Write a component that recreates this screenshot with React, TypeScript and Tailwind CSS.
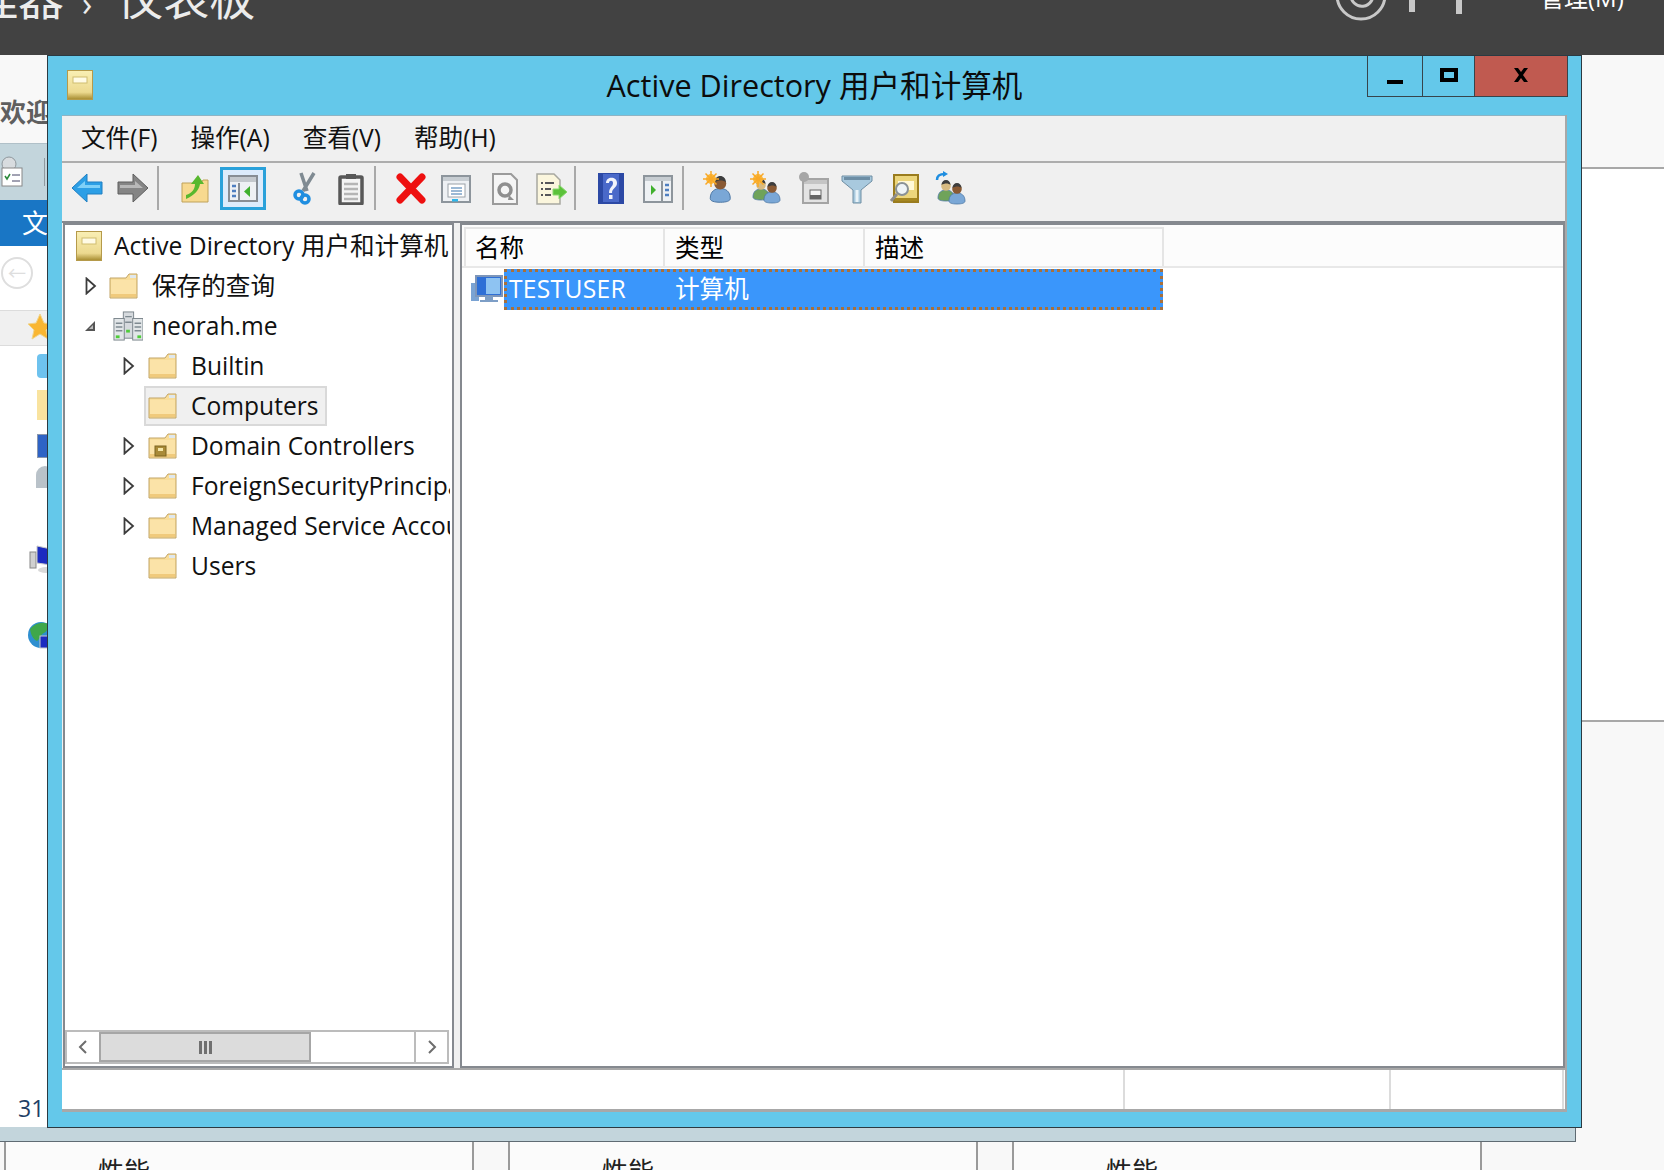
import React from "react";

const FONT = { fontFamily: '"Open Sans","Noto Sans CJK SC",sans-serif' };

function Folder({ badge = false }: { badge?: boolean }) {
  return (
    <svg width="30" height="28" viewBox="0 0 30 28" className="shrink-0">
      <path d="M1 6h16l3-4h8v24H1z" fill="#f9dd99" stroke="#c2a566" />
      <path d="M2 8h25v17H2z" fill="#fbe3a8" />
      <path d="M21 3h6v3h-6z" fill="#dfe8ee" />
      <path d="M2 22h25v3H2z" fill="#f0ca7c" />
      {badge && <rect x="7" y="14" width="11" height="10" fill="#a98a37" stroke="#7c6520" />}
      {badge && <rect x="10" y="16" width="5" height="3" fill="#f4e6a8" />}
    </svg>
  );
}

function Book({ w = 26, h = 30 }: { w?: number; h?: number }) {
  return (
    <svg width={w} height={h} viewBox="0 0 26 30" className="shrink-0">
      <defs>
        <linearGradient id="bk" x1="0" y1="0" x2="0" y2="1">
          <stop offset="0" stopColor="#f9efb4" />
          <stop offset="0.75" stopColor="#ecd98f" />
          <stop offset="1" stopColor="#a58a2e" />
        </linearGradient>
      </defs>
      <rect x="0.5" y="0.5" width="25" height="29" fill="url(#bk)" stroke="#b59a4a" />
      <rect x="6" y="7" width="14" height="6" fill="#fffbe6" stroke="#d0bd70" />
    </svg>
  );
}

function Person({ x, y, s = 1, shirt = "#7aa7d6", face = "#8a5a33" }: { x: number; y: number; s?: number; shirt?: string; face?: string }) {
  return (
    <g transform={`translate(${x} ${y}) scale(${s})`}>
      <path d="M1 18c0-6 4-8 8-8s8 2 8 8c0 2-3 3-8 3s-8-1-8-3z" fill={shirt} stroke="#4e78a5" strokeWidth="0.8" />
      <circle cx="9" cy="6" r="4.8" fill={face} />
      <path d="M4.5 5c0-3 2-5 4.5-5s4.5 2 4.5 5c-2-2-6-2-9 0z" fill="#3d3d3d" />
    </g>
  );
}

function Sun({ x, y }: { x: number; y: number }) {
  return (
    <g>
      <circle cx={x} cy={y} r="5" fill="#fbb93c" />
      <path d={`M${x - 8} ${y}h16M${x} ${y - 8}v16M${x - 5.5} ${y - 5.5}l11 11M${x + 5.5} ${y - 5.5}l-11 11`} stroke="#f9a825" strokeWidth="1.5" />
    </g>
  );
}

const I = ({ children }: { children: React.ReactNode }) => (
  <svg width="32" height="34" viewBox="0 0 32 34" className="shrink-0">{children}</svg>
);

const WinFrame = () => (
  <>
    <rect x="2" y="5" width="28" height="26" fill="#eef1f4" stroke="#8d959c" strokeWidth="2" />
    <rect x="3" y="6" width="26" height="4" fill="#c7cdd2" />
  </>
);

function Toolbar() {
  const sep = "w-[2px] h-[44px] bg-[#a9a9a9] shrink-0";
  return (
    <div className="h-[58px] bg-[#f0f0f0] flex items-center shrink-0 pb-[8px]">
      <div className="ml-[9px]"><I><path d="M1 17 16 3v8h15v12H16v8z" fill="#2c9fe6" stroke="#1f7fc2" /><path d="M6 17 14 10v4h15v3H14z" fill="#7fd0f8" /></I></div>
      <div className="ml-[14px]"><I><path d="M31 17 16 3v8H1v12h15v8z" fill="#858585" stroke="#5f5f5f" /><path d="M26 17 18 10v4H3v3h15z" fill="#b8b8b8" /></I></div>
      <div className={sep + " ml-[8px]"} />
      <div className="ml-[20px]"><I>
        <path d="M3 12h19l2-3h5v22H3z" fill="#f7d98f" stroke="#bfa25b" />
        <path d="M7 24c6-2 9-6 9-11h-4l7-9 6 9h-4c-1 6-5 11-14 15z" fill="#58b82e" />
      </I></div>
      <div className="ml-[9px] w-[46px] h-[43px] border-[3px] border-[#2aa1da] bg-[#dcebfb] flex items-center justify-center shrink-0">
        <svg width="32" height="30" viewBox="0 0 32 30">
          <rect x="2" y="3" width="28" height="25" fill="#eef1f4" stroke="#878d94" strokeWidth="2" />
          <rect x="3" y="4" width="26" height="5" fill="#c3c8cd" />
          <path d="M12 10v18" stroke="#878d94" strokeWidth="2" />
          <path d="M5 13h4M5 18h4M5 23h4" stroke="#4f7fc0" strokeWidth="2.5" />
          <path d="M23 13v11l-6-5.500z" fill="#3fb02e" />
        </svg>
      </div>
      <div className="ml-[24px]"><I>
        <path d="M13 20 24 2M17 20 11 2" stroke="#7f8a92" strokeWidth="3.500" />
        <circle cx="9" cy="24" r="4" fill="none" stroke="#1f8ee0" strokeWidth="3.500" />
        <circle cx="15" cy="28" r="4" fill="none" stroke="#1f8ee0" strokeWidth="3.500" />
      </I></div>
      <div className="ml-[13px]"><I>
        <rect x="5" y="6" width="22" height="27" rx="1" fill="#f4f4f4" stroke="#585858" strokeWidth="3.500" />
        <rect x="11" y="3" width="10" height="5" fill="#585858" />
        <path d="M9 13h14M9 18h14M9 23h14M9 28h14" stroke="#b5b5b5" strokeWidth="2.500" />
      </I></div>
      <div className={sep + " ml-[7px]"} />
      <div className="ml-[19px]"><I>
        <path d="M5 6 27 29M27 6 5 29" stroke="#ee1010" strokeWidth="7" strokeLinecap="round" />
      </I></div>
      <div className="ml-[13px]"><I><WinFrame />
        <rect x="8" y="13" width="17" height="13" fill="#fff" stroke="#9aa2a8" />
        <path d="M11 17h11M11 20h11M11 23h11" stroke="#7ba3c7" strokeWidth="1.300" />
        <rect x="12" y="28" width="6" height="2.500" fill="#2eb6ea" />
      </I></div>
      <div className="ml-[17px]"><I>
        <path d="M4 3h18l6 6v24H4z" fill="#f5f5f5" stroke="#9b9b9b" strokeWidth="2" />
        <circle cx="16" cy="19" r="6" fill="none" stroke="#8f8f8f" strokeWidth="3.500" />
        <path d="M20 24l5 5h-6z" fill="#8f8f8f" />
      </I></div>
      <div className="ml-[14px]"><I>
        <path d="M2 3h17l6 6v24H2z" fill="#fbf6dd" stroke="#a8a8a0" strokeWidth="1.500" />
        <path d="M6 12h2M10 12h9M6 18h2M10 18h6M6 24h2M10 24h6" stroke="#56565a" strokeWidth="1.800" />
        <path d="M18 18h6v-4l8 7-8 7v-4h-6z" fill="#5cc23a" stroke="#8ad870" />
      </I></div>
      <div className={sep + " ml-[7px]"} />
      <div className="ml-[19px]"><I>
        <rect x="3" y="2" width="26" height="31" fill="#2c49a5" />
        <rect x="8" y="3" width="16" height="28" fill="#4a69c9" />
        <path d="M11 12c0-7 11-7 11 0 0 5-5 5-5 10h-3c0-6 4-6 4-10 0-3-4-3-4 0z" fill="#f1f3fb" />
        <rect x="14" y="24" width="3.500" height="4" fill="#f1f3fb" />
      </I></div>
      <div className="ml-[15px]"><I><WinFrame />
        <path d="M20 10v20" stroke="#8d959c" strokeWidth="2" />
        <path d="M23 14h4M23 19h4M23 24h4" stroke="#4f7fc0" strokeWidth="2.500" />
        <path d="M9 14v10l5-5z" fill="#3fb02e" />
      </I></div>
      <div className={sep + " ml-[8px]"} />
      <div className="ml-[19px]"><I><Person x={6} y={5} s={1.25} /><Sun x={8} y={8} /></I></div>
      <div className="ml-[15px]"><I><Person x={2} y={8} face="#d8bb82" shirt="#6fa35a" /><Person x={13} y={11} /><Sun x={8} y={8} /></I></div>
      <div className="ml-[15px]"><I>
        <rect x="6" y="8" width="25" height="24" fill="#e3e3e3" stroke="#a4a4a4" strokeWidth="2" />
        <rect x="7" y="9" width="23" height="4" fill="#c5c5c5" />
        <rect x="13" y="19" width="11" height="9" fill="#f5f5f5" stroke="#6a6a6a" />
        <rect x="13" y="24" width="11" height="4" fill="#666" />
        <circle cx="7" cy="6" r="5" fill="#a6a6a6" />
      </I></div>
      <div className="ml-[12px]"><I>
        <path d="M1 5h30v5L20 19v13h-8V19L1 10z" fill="#a8c9de" stroke="#6f8ea3" />
        <path d="M3 6h26v3H3z" fill="#6d8ea5" />
        <path d="M14.500 19v12h3V19z" fill="#e9f3f9" />
      </I></div>
      <div className="ml-[15px]"><I>
        <rect x="6" y="4" width="24" height="27" fill="#ecd67c" stroke="#9a7c1e" strokeWidth="2" />
        <rect x="10" y="10" width="16" height="9" fill="#fff9d8" />
        <rect x="7" y="27" width="22" height="3" fill="#a58720" />
        <circle cx="14" cy="18" r="6" fill="#eef4f6" stroke="#8a9296" strokeWidth="2" />
        <path d="M9 23 3 30" stroke="#8d8d8d" strokeWidth="3" />
      </I></div>
      <div className="ml-[15px]"><I>
        <Person x={2} y={9} face="#d8bb82" shirt="#6fa35a" /><Person x={13} y={12} />
        <path d="M2 9c0-5 3-6 8-6" stroke="#1f8ee0" strokeWidth="2.500" fill="none" />
        <path d="M8 0l5 3-5 3z" fill="#1f8ee0" />
      </I></div>
    </div>
  );
}

function Arrow({ open = false }: { open?: boolean }) {
  return open ? (
    <svg width="14" height="14" viewBox="0 0 14 14" className="shrink-0"><path d="M12 2v10H2z" fill="#555" /><path d="M10 6v4H6z" fill="#bbb" /></svg>
  ) : (
    <svg width="12" height="18" viewBox="0 0 12 18" className="shrink-0"><path d="M1.500 1.500 10 9l-8.500 7.500z" fill="#fff" stroke="#3c3c3c" strokeWidth="1.800" /></svg>
  );
}

function Domain() {
  return (
    <svg width="30" height="32" viewBox="0 0 32 32" className="shrink-0">
      <rect x="11" y="1" width="11" height="28" fill="#d6dade" stroke="#79838a" />
      <rect x="1" y="8" width="11" height="23" fill="#e2e6e8" stroke="#79838a" />
      <rect x="21" y="8" width="11" height="23" fill="#e2e6e8" stroke="#79838a" />
      <path d="M3 13h7M3 17h7M3 21h7M23 13h7M23 17h7M23 21h7M13 6h7M13 12h7" stroke="#7f8a91" strokeWidth="1.500" />
      <rect x="3" y="26" width="4" height="3" fill="#4fcc3a" /><rect x="14" y="20" width="4" height="3" fill="#4fcc3a" /><rect x="26" y="26" width="4" height="3" fill="#4fcc3a" />
    </svg>
  );
}

function ChildRow({ label, arrow = true, badge = false, selected = false }: { label: string; arrow?: boolean; badge?: boolean; selected?: boolean }) {
  return (
    <div className="h-[40px] flex items-center">
      <div className="w-[12px] ml-[58px] flex justify-center shrink-0">{arrow && <Arrow />}</div>
      {selected ? (
        <div className="ml-[9px] h-[40px] pl-[2px] pr-[6px] flex items-center bg-[#f0f0f0] border-2 border-[#d9d9d9]">
          <Folder />
          <span className="ml-[13px] text-[#111] whitespace-nowrap">{label}</span>
        </div>
      ) : (
        <div className="ml-[13px] flex items-center">
          <Folder badge={badge} />
          <span className="ml-[13px] text-[#111] whitespace-nowrap">{label}</span>
        </div>
      )}
    </div>
  );
}

function Tree() {
  return (
    <div className="w-[391px] border-2 border-[#85898f] bg-white flex flex-col shrink-0">
      <div className="flex-1 min-h-0 mr-[2px] pt-[1px] overflow-hidden text-[24.6px] leading-[30px]">
        <div className="h-[40px] flex items-center pl-[11px] whitespace-nowrap">
          <Book />
          <span className="ml-[12px] text-[#111]">Active Directory 用户和计算机</span>
        </div>
        <div className="h-[40px] flex items-center">
          <div className="w-[12px] ml-[20px] flex justify-center"><Arrow /></div>
          <div className="ml-[12px]"><Folder /></div>
          <span className="ml-[13px] text-[#111]">保存的查询</span>
        </div>
        <div className="h-[40px] flex items-center">
          <div className="w-[14px] ml-[18px]"><Arrow open /></div>
          <div className="ml-[16px]"><Domain /></div>
          <span className="ml-[9px] text-[#111]">neorah.me</span>
        </div>
        <ChildRow label="Builtin" />
        <ChildRow label="Computers" arrow={false} selected />
        <ChildRow label="Domain Controllers" badge />
        <ChildRow label="ForeignSecurityPrincipals" />
        <ChildRow label="Managed Service Accounts" />
        <ChildRow label="Users" arrow={false} />
      </div>
      <div className="mr-[3px] mb-[2px] h-[34px] flex border-2 border-[#bcbcbc] shrink-0">
        <div className="w-[32px] flex items-center justify-center">
          <svg width="12" height="16" viewBox="0 0 12 16"><path d="M9 2 3 8l6 6" fill="none" stroke="#6d6d6d" strokeWidth="2" /></svg>
        </div>
        <div className="w-[212px] bg-[#dcdcdc] border-2 border-[#a6a6a6] flex items-center justify-center gap-[2px]">
          <div className="w-[3px] h-[13px] bg-[#707070]" /><div className="w-[3px] h-[13px] bg-[#707070]" /><div className="w-[3px] h-[13px] bg-[#707070]" />
        </div>
        <div className="flex-1" />
        <div className="w-[33px] border-l-2 border-[#bcbcbc] flex items-center justify-center">
          <svg width="12" height="16" viewBox="0 0 12 16"><path d="M3 2l6 6-6 6" fill="none" stroke="#6d6d6d" strokeWidth="2" /></svg>
        </div>
      </div>
    </div>
  );
}

function ListPane() {
  return (
    <div className="ml-[6px] flex-1 border-2 border-[#85898f] bg-white flex flex-col min-w-0">
      <div className="h-[43px] flex bg-[#fcfcfc] border-b-2 border-[#e8e8e8] pl-[2px] pt-[2px] shrink-0">
        <div className="w-[201px] pl-[9px] pt-[1px] flex items-center border-r-2 border-l-2 border-t-2 border-[#e5e5e5] text-[24.6px] text-black">名称</div>
        <div className="w-[200px] pl-[10px] pt-[1px] flex items-center border-r-2 border-t-2 border-[#e5e5e5] text-[24.6px] text-black">类型</div>
        <div className="w-[299px] pl-[10px] pt-[1px] flex items-center border-r-2 border-t-2 border-[#e5e5e5] text-[24.6px] text-black">描述</div>
      </div>
      <div className="h-[41px] mt-[1px] flex items-center pl-[9px]">
        <svg width="32" height="30" viewBox="0 0 32 30" className="shrink-0">
          <rect x="0" y="8" width="8" height="18" fill="#7aa3d3" />
          <rect x="5" y="1" width="26" height="20" fill="#2e6fd6" stroke="#7d96ba" strokeWidth="2" />
          <rect x="15" y="3" width="14" height="16" fill="#8ec3f2" />
          <path d="M14 21h8v4h5v2H9v-2h5z" fill="#7d9ec6" />
        </svg>
        <div className="ml-[1px] w-[659px] h-[41px] bg-[#3a96fb] border-[3px] border-dotted border-[#a9703a] flex items-center text-[24.6px] text-white shrink-0">
          <span className="w-[168px] pl-[2px] tracking-[0.3px]">TESTUSER</span>
          <span>计算机</span>
        </div>
      </div>
    </div>
  );
}

function Window() {
  return (
    <div className="absolute left-[47px] top-[55px] w-[1535px] h-[1073px] bg-[#64c8ea] border border-[#2b3a42] flex flex-col" style={FONT}>
      <div className="h-[59px] grid grid-cols-[1fr_auto_1fr] shrink-0">
        <div className="ml-[19px] mt-[14px]"><Book w={26} h={30} /></div>
        <div className="pt-[10px] text-[30.6px] leading-[38px] text-[#0c0c0c] whitespace-nowrap">Active Directory 用户和计算机</div>
        <div className="flex justify-end">
          <div className="mr-[13px] h-[41px] flex border border-t-0 border-[#37444b] shrink-0">
            <div className="w-[55px] border-r border-[#37444b] relative"><div className="absolute left-[19px] top-[24px] w-[16px] h-[4px] bg-black" /></div>
            <div className="w-[52px] border-r border-[#37444b] flex justify-center pt-[12px]"><div className="w-[18px] h-[14px] border-[4px] border-black" /></div>
            <div className="w-[92px] bg-[#c05a50] flex justify-center items-start">
              <svg width="18" height="16" viewBox="0 0 18 16" className="mt-[11px]"><path d="M2 1h4l3 4 3-4h4l-5 7 5 7h-4l-3-4-3 4H2l5-7z" fill="#000" /></svg>
            </div>
          </div>
        </div>
      </div>
      <div className="mx-[14px] flex-1 flex flex-col min-h-0 mb-[15px] bg-[#f0f0f0] border-r-2 border-[#a8a8a8]">
        <div className="h-[48px] bg-[#f0f0f0] border-b-2 border-[#adadad] flex items-center pl-[19px] text-[24.6px] text-[#111] shrink-0 gap-[33px] border-t border-t-[#8fb4c4]">
          <span>文件(F)</span><span>操作(A)</span><span>查看(V)</span><span>帮助(H)</span>
        </div>
        <Toolbar />
        <div className="flex-1 flex pl-[1px] min-h-0 border-t-2 border-[#85898f]">
          <Tree />
          <ListPane />
        </div>
        <div className="h-[44px] bg-white border-t-2 border-[#a8a8a8] border-b-[3px] border-b-[#a8a8a8] flex shrink-0">
          <div className="w-[1063px] border-r-2 border-[#dcdcdc]" />
          <div className="w-[266px] border-r-2 border-[#dcdcdc]" />
          <div className="flex-1 border-r-2 border-[#dcdcdc] mr-[1px]" />
        </div>
      </div>
    </div>
  );
}

function Tile() {
  return (
    <div className="w-[470px] h-[28px] bg-[#fbfbfb] border-x-2 border-[#9a9a9a] pl-[92px] pt-[14px] text-[26px] leading-[30px] text-[#222] overflow-hidden shrink-0">
      性能
    </div>
  );
}

export default function App() {
  return (
    <div className="relative w-[1664px] h-[1170px] bg-[#f8f8f8] overflow-hidden" style={FONT}>
      <div className="h-[55px] bg-[#424242] relative overflow-hidden">
        <div className="absolute left-[-28px] top-[-38px] flex items-center text-[46px] leading-[58px] text-[#ececec] whitespace-nowrap">
          <span>理器</span><span className="ml-[18px] mt-[12px] text-[34px]">›</span><span className="ml-[25px]">仪表板</span>
        </div>
        <svg className="absolute left-[1336px] top-[-22px]" width="130" height="44" viewBox="0 0 130 44">
          <circle cx="25" cy="17" r="24" fill="none" stroke="#c8c8c8" strokeWidth="3" />
          <path d="M15 16a11 11 0 1 0 5-8" fill="none" stroke="#c8c8c8" strokeWidth="3" />
          <rect x="73" y="0" width="6" height="34" fill="#c8c8c8" />
          <rect x="120" y="0" width="6" height="36" fill="#c8c8c8" />
        </svg>
        <div className="absolute left-[1540px] top-[-16px] text-[24px] leading-[28px] text-white whitespace-nowrap">管理(M)</div>
      </div>

      <div className="flex h-[1072px]">
        <div className="w-[300px] flex flex-col shrink-0">
          <div className="h-[88px] pt-[42px] text-[26px] leading-[30px] font-bold text-[#5f5f5f] whitespace-nowrap">欢迎</div>
          <div className="h-[57px] bg-[#c3d5dc] border-t border-[#b0c0c8] flex items-center">
            <svg width="26" height="32" viewBox="0 0 26 32"><circle cx="9" cy="8" r="7" fill="#d8dcdf" stroke="#8f979c" /><rect x="2" y="12" width="20" height="18" fill="#fff" stroke="#888" /><path d="M5 20l2 3 3-5" fill="none" stroke="#2a8a3a" strokeWidth="1.500" /><path d="M12 19h8M12 25h8" stroke="#446" /></svg>
            <div className="ml-[18px] w-px h-[28px] bg-[#8f9aa0]" />
          </div>
          <div className="h-[46px] bg-[#1976c5] pl-[22px] flex items-center text-[26px] text-white whitespace-nowrap">文</div>
          <div className="h-[64px] bg-white pt-[11px]">
            <div className="w-[32px] h-[32px] rounded-full border-2 border-[#dedede] ml-[1px] flex items-center justify-center text-[#dedede] text-[18px]">←</div>
          </div>
          <div className="h-[36px] bg-[#f0f0f0] border-y border-[#dcdcdc] flex items-center pl-[27px]">
            <svg width="26" height="30" viewBox="0 0 26 30"><path d="M13 1l4 9 8 1-6 6 2 9-8-5-8 5 2-9-6-6 8-1z" fill="#f9b632" stroke="#f0d48a" /></svg>
          </div>
          <div className="flex-1 bg-white pl-[37px] flex flex-col">
            <div className="mt-[8px] w-[20px] h-[24px] rounded-sm bg-[#6ec2ee]" />
            <div className="mt-[12px] w-[20px] h-[30px] bg-[#f9e39f]" />
            <div className="mt-[14px] w-[20px] h-[24px] bg-[#2e63c5] border border-[#8a97ad]" />
            <div className="mt-[8px] ml-[-1px] w-[18px] h-[22px] rounded-t-full bg-[#b9c2c9]" />
            <svg width="30" height="30" viewBox="0 0 30 30" className="mt-[56px] ml-[-9px]">
              <rect x="2" y="8" width="6" height="16" fill="#d0d0d0" stroke="#888" />
              <path d="M9 2l14 3v16L9 19z" fill="#1c2cc0" stroke="#c9c9c9" />
              <ellipse cx="18" cy="26" rx="8" ry="3" fill="#d9d9d9" />
            </svg>
            <svg width="34" height="34" viewBox="0 0 34 34" className="mt-[46px] ml-[-11px]">
              <circle cx="15" cy="15" r="13" fill="#2e8fd0" />
              <path d="M4 9c6-7 14-8 20-4-3 3-2 6-6 8s-4 6-7 8c-4-2-6-6-7-12z" fill="#3fa74a" />
              <rect x="14" y="16" width="14" height="12" fill="#1c2cc0" stroke="#c9c9c9" />
            </svg>
            <div className="mt-[440px] ml-[-19px] text-[23px] leading-[28px] text-[#1f3f66]">31</div>
          </div>
        </div>
        <div className="flex-1 flex flex-col">
          <div className="h-[112px]" />
          <div className="h-[555px] bg-white border-y-2 border-[#a8a8a8]" />
        </div>
      </div>

      <div className="absolute left-0 top-[1127px] w-[1576px] h-[15px] bg-[#c3d5dc] border-r border-b border-[#5f6b73]" />
      <div className="absolute left-0 top-[1142px] flex">
        <div className="ml-[4px]"><Tile /></div>
        <div className="ml-[34px]"><Tile /></div>
        <div className="ml-[34px]"><Tile /></div>
      </div>

      <Window />
    </div>
  );
}
